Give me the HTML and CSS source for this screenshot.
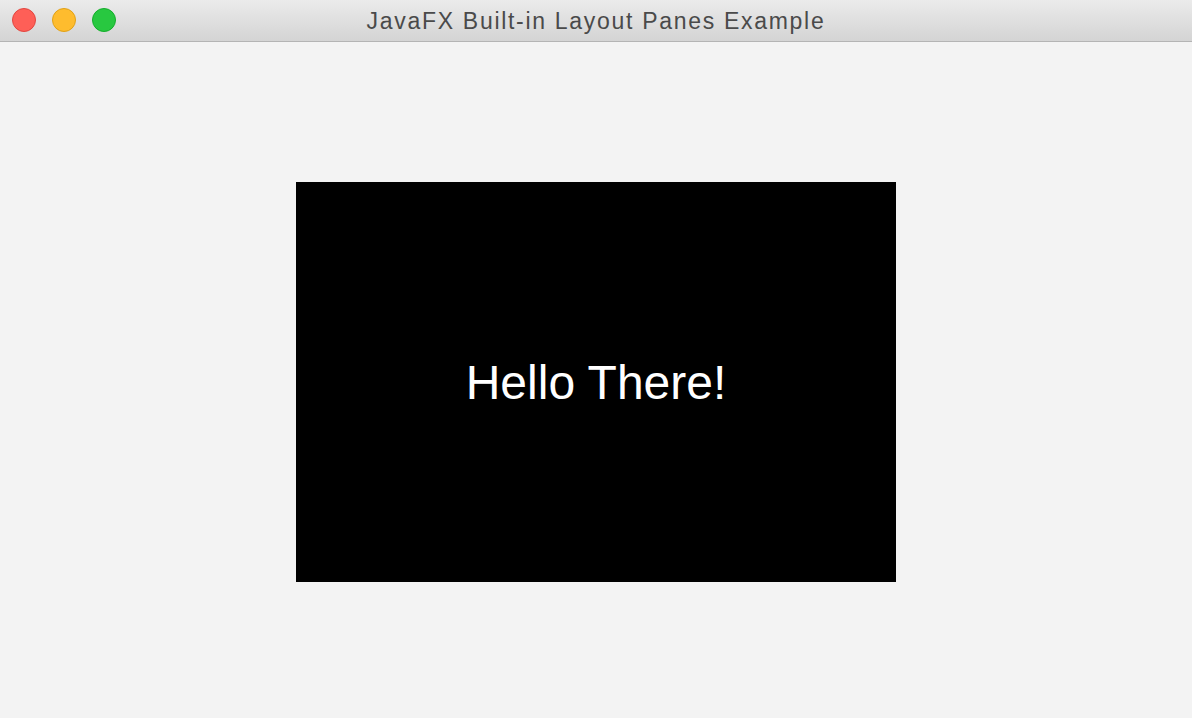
FILE: index.html
```html
<!DOCTYPE html>
<html lang="en">
<head>
    <meta charset="UTF-8">
    <title>JavaFX Built-in Layout Panes Example</title>
    <link rel="stylesheet" href="styles.css">
</head>
<body>
    <div class="window">
        <div class="titlebar">
            <ul class="lights">
                <li class="close"></li>
                <li class="minimize"></li>
                <li class="zoom"></li>
            </ul>
            <div class="title">JavaFX Built-in Layout Panes Example</div>
        </div>
        <div class="content">
            <div class="pane">
                <span class="hello">Hello There!</span>
            </div>
        </div>
    </div>
</body>
</html>
```

FILE: styles.css
```css
* {
    margin: 0;
    padding: 0;
    border: 0;
    list-style: none;
    box-sizing: border-box;
}
body, html, .window {
    height: 100%;
}
body {
    font-family: "Liberation Sans", Arial, sans-serif;
    background: #f3f3f3;
}
.window {
    display: flex;
    flex-direction: column;
}
.titlebar {
    height: 42px;
    flex-shrink: 0;
    display: flex;
    align-items: center;
    justify-content: center;
    position: relative;
    background: linear-gradient(#ebebeb, #d4d4d4);
    border-bottom: 1px solid #b4b4b4;
}
.lights {
    position: absolute;
    left: 12px;
    top: 8px;
    display: flex;
    gap: 16px;
}
.lights li {
    width: 24px;
    height: 24px;
    border-radius: 50%;
}
.lights .close {
    background: #fe5f57;
    border: 1px solid #e2463f;
}
.lights .minimize {
    background: #febc2e;
    border: 1px solid #e1a116;
}
.lights .zoom {
    background: #28c840;
    border: 1px solid #14ae2b;
}
.title {
    font-family: "Liberation Sans", Arial, sans-serif;
    font-size: 23px;
    letter-spacing: 1.7px;
    color: #4a4a4a;
    padding-top: 1px;
}
.content {
    flex: 1;
    display: flex;
    align-items: center;
    justify-content: center;
    padding-top: 3px;
}
.pane {
    width: 600px;
    height: 400px;
    background: #000;
    display: flex;
    align-items: center;
    justify-content: center;
}
.hello {
    color: #fff;
    font-size: 48px;
    padding-top: 2px;
    font-family: "Liberation Sans", Arial, sans-serif;
}
```
